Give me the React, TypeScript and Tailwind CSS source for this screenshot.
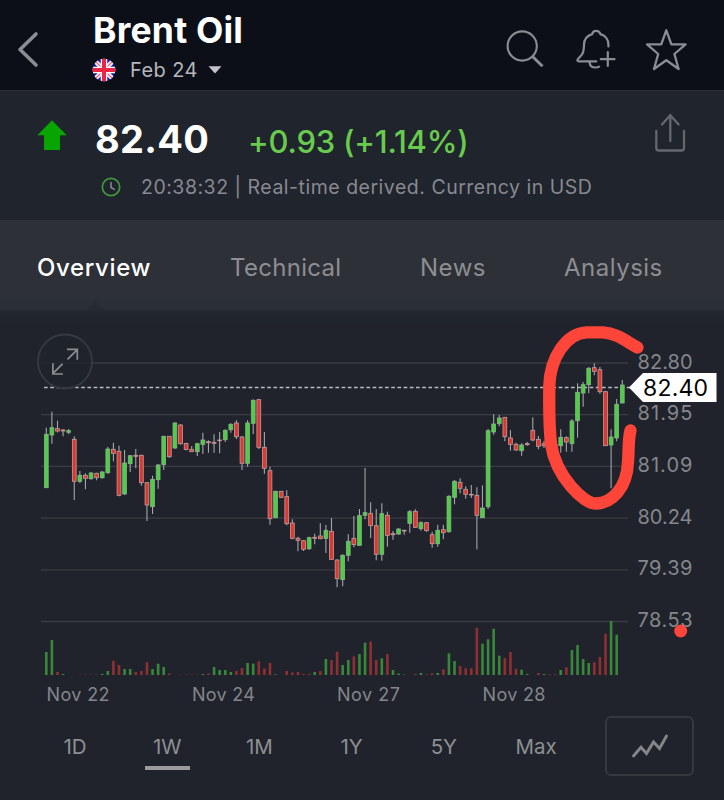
import type { ReactNode } from "react";

type Candle = [number, number, number, number, 0 | 1];

const X0 = 46.3;
const STEP = 5.592;
const BASE = 675;

// high, body top, body bottom, low, up?
const CANDLES: Candle[] = [
  [427.7, 434.3, 487.7, 487.7, 1], [411.7, 427.7, 435, 443.7, 1], [420.7, 428.7, 431, 432.5, 0], [429.3, 430, 431, 436.3, 0],
  [429, 430.7, 432.3, 434.3, 1], [436.3, 439.3, 481.3, 500, 0], [471, 475.3, 481.3, 483, 1], [473.3, 475.3, 478.3, 489.3, 0],
  [472, 473, 478.7, 479.7, 1], [472.7, 473.3, 477.7, 480.3, 0], [471, 472, 477.7, 478.7, 1], [447, 449, 472.7, 473.7, 1],
  [442.7, 449.3, 453.3, 461.3, 0], [445.7, 451.3, 495.3, 496.3, 0], [450, 463, 494, 495, 1], [455, 455.7, 463.7, 472, 1],
  [449, 455.3, 456.3, 468.3, 0], [454.7, 455.3, 482.7, 485.7, 0], [482, 482.7, 505, 521, 0], [475.7, 479.3, 506.7, 514, 1],
  [464, 465, 479.7, 488.7, 1], [435.7, 436.3, 464.7, 470, 1], [436, 436.3, 456.7, 458, 0], [422.3, 423, 448, 449, 1],
  [424, 425, 443.7, 444.7, 0], [442.7, 443.5, 449.5, 450.3, 0], [446, 449.3, 451.7, 452, 0], [442.7, 443.7, 451.7, 456, 1],
  [432.7, 440, 444.3, 454, 1], [440.3, 441.7, 442.7, 452.7, 0], [434.3, 442.3, 443.3, 452.7, 0], [432, 440, 440.7, 453.3, 0],
  [429.3, 430.3, 439.7, 442, 1], [423.3, 424.3, 429.7, 432.7, 1], [420.3, 423, 436.7, 439, 0], [436, 437, 463.3, 470, 0],
  [420.3, 423, 463.3, 466.7, 1], [399.3, 400.3, 423.3, 434, 1], [399, 399.7, 447.3, 449, 0], [432, 447.3, 468.3, 473.7, 0],
  [466.7, 470.7, 518.7, 524.7, 0], [490.7, 491.3, 517.7, 518.3, 1], [491, 491.3, 497.3, 498, 0], [490.3, 496.7, 523.7, 525.3, 0],
  [519.3, 523, 538.3, 539.3, 0], [536.7, 538.3, 540.3, 551.3, 0], [540, 540.7, 549.3, 551, 0], [536.7, 537.7, 548.7, 550, 1],
  [533.7, 537.3, 538.3, 544.3, 0], [523.3, 536, 538.7, 539.3, 0], [525, 530.3, 538.3, 553, 1], [518, 531.3, 559.3, 560, 0],
  [559.3, 560, 578.7, 587.3, 0], [554.3, 555.3, 579.7, 586.3, 1], [534.3, 541.3, 555.3, 561.3, 1], [516, 538.3, 544.7, 547.3, 0],
  [509, 515.7, 545.3, 546, 1], [468, 512.7, 515.3, 519.3, 1], [502.3, 513.3, 525.7, 538, 0], [509, 525.7, 554.3, 560.3, 0],
  [503.3, 513.7, 554.3, 560.7, 1], [511.7, 515.3, 535.3, 546.7, 0], [531, 533.7, 534.7, 539.7, 0], [528.3, 529, 534, 535, 1],
  [529.7, 530.3, 531, 534.7, 0], [510, 511.7, 523.3, 532.7, 1], [509.3, 511.3, 527.3, 528, 0], [521.3, 522.7, 528.7, 530.7, 1],
  [522, 522.7, 530.7, 531.7, 0], [531.7, 534.7, 543.7, 547.7, 0], [524.7, 530.3, 543.7, 546.7, 1], [524.7, 529.7, 532.7, 539.3, 0],
  [495.3, 496.3, 531.7, 532.7, 1], [480, 481.3, 497.3, 504.3, 1], [478.3, 482.3, 488.3, 493.3, 0], [486.3, 489.3, 494.3, 498.7, 0],
  [485, 494.3, 495, 498, 0], [487.3, 495.3, 515.3, 549.3, 0], [485.3, 508, 517.7, 518, 1], [429, 430.7, 506.7, 509, 1],
  [414.3, 424, 432, 434.7, 1], [415, 418, 423.7, 426.3, 1], [417, 417.3, 436.7, 441.3, 0], [430.3, 438, 444.3, 450.7, 0],
  [442.7, 444.3, 450, 450.7, 0], [443.3, 445, 450.7, 455.7, 1], [442, 443.7, 444.7, 445.7, 0], [417.3, 430.3, 440, 441.3, 0],
  [436, 439.3, 446.3, 449.3, 0], [441, 443.7, 445.7, 448, 0], [442, 444, 445, 448, 0], [443, 444.3, 445.3, 446, 0],
  [429.3, 437.3, 445.7, 452.7, 1], [436.3, 437.7, 442, 451.7, 0], [419.3, 421, 443.7, 451.7, 1], [383.3, 392.3, 420.7, 437.7, 1],
  [382, 384.7, 393, 406.7, 1], [367, 368.3, 384.7, 393.3, 1], [363.3, 367.7, 371.3, 375.3, 0], [367, 369.7, 391.7, 393.7, 0],
  [391, 391.7, 445.7, 446, 0], [429.3, 437, 445, 488.3, 1], [399, 404.3, 438, 441.3, 1], [380, 385, 403, 403.3, 1],
];

// bar heights, negative = down bar
const VOLUME = [
  23, 35, -3, 1, 0, 0, -0.4, -0.4, -0.4, -0.4, 1, 4, -14.3, -10, 6, 6, -3, -4, -12.7, 6, 11.3, 8, -1.5, 0, -0.4, -0.4,
  -0.4, -0.4, 1, -1.5, 8, 5, 5, 3, -4, -7, 12, 11.3, -13.7, -6.5, -12, 0.7, 0, -4, -2.5, -3, -1, -1, 3, -4, 16, -15,
  -23.3, 10, 15, -18.5, 21, 32.3, -33.3, -15, 16.7, -21, 5, 1.5, 0.4, 0, -1, 2, -0.5, -1.7, 2, -5.7, 21.7, 14, -9, -6.7,
  -6.7, -47.3, 31.3, 35.7, 46.3, 19.3, -17, -23, -6.3, 5.3, 1, 0, -2, 1, -0.7, -0.7, 5, -7.7, 25, 30, 16, 12, -12.7,
  -18, -41.3, 54, 40.3,
];

const PRICES = [
  { label: "82.80", y: 363 },
  { label: "81.95", y: 414.7 },
  { label: "81.09", y: 466.3 },
  { label: "80.24", y: 518.2 },
  { label: "79.39", y: 569.8 },
  { label: "78.53", y: 621.5 },
];

const DATES = [
  { label: "Nov 22", x: 46.5 },
  { label: "Nov 24", x: 192 },
  { label: "Nov 27", x: 337 },
  { label: "Nov 28", x: 482.5 },
];

const RANGES = ["1D", "1W", "1M", "1Y", "5Y", "Max"];

function Icon({ box, className, children }: { box: string; className: string; children: ReactNode }) {
  return (
    <svg viewBox={box} className={className} fill="none" stroke="currentColor" strokeLinecap="round" strokeLinejoin="round">
      {children}
    </svg>
  );
}

function Flag() {
  return (
    <svg viewBox="0 0 24 24" className="w-6 h-6 shrink-0">
      <defs>
        <clipPath id="flag">
          <circle cx="12" cy="12" r="11.3" />
        </clipPath>
      </defs>
      <g clipPath="url(#flag)">
        <path d="M0 0h24v24H0z" fill="#1d1f9c" />
        <path d="M0 0 24 24M24 0 0 24" stroke="#f4eef6" strokeWidth="4.5" />
        <path d="M0 0 24 24M24 0 0 24" stroke="#e8607f" strokeWidth="1.2" />
        <path d="M12 0v24M0 12h24" stroke="#fff" strokeWidth="6.6" />
        <path d="M12 0v24M0 12h24" stroke="#ee2447" strokeWidth="4" />
      </g>
    </svg>
  );
}

function Header() {
  return (
    <header className="flex h-[91px] bg-[#0c0f17] border-b border-[#2d3039] text-[#8b8d94]">
      <Icon box="15 28 26 44" className="w-[26px] h-11 ml-[15px] mt-7">
        <path d="M36 34 20 49.5 36 65" strokeWidth="3.6" />
      </Icon>
      <div className="ml-[51px] w-[410px]">
        <h1 className="mt-[11px] h-10 leading-10 pl-px text-[35.5px] font-bold tracking-[0.2px] text-white whitespace-nowrap">
          Brent Oil
        </h1>
        <div className="flex items-center h-[37px] text-[#b5b7be]">
          <Flag />
          <span className="ml-3.5 text-[20px] tracking-[0.4px]">Feb 24</span>
          <svg viewBox="0 0 14 8" className="w-3.5 h-2 ml-[10px]">
            <path d="M.5 .3h13L7 7.5z" fill="#c3c4ca" />
          </svg>
        </div>
      </div>
      <Icon box="504 28 42 42" className="w-[42px] h-[42px] mt-7 ml-0.5">
        <circle cx="522.2" cy="46" r="14.6" strokeWidth="2.1" />
        <path d="m532.5 56.5 10 9.8" strokeWidth="3" strokeLinecap="butt" />
      </Icon>
      <Icon box="574 28 42 42" className="w-[42px] h-[42px] mt-7 ml-7">
        <path
          d="M608.4 46.5v-2c0-5-3.2-9.1-8-10.4-.8-2.3-2.4-3.2-4.300-3.200-2 0-3.400 .9-4 3.200-5 1.500-8 5.500-8.100 10.600-.2 6.300-.7 9.300-4.200 12.300l-1.800 2c-1.200 1.200-.6 2.300 .8 2.300h17.500M589.500 62c.2 3.600 1.900 5.300 5 5.500 2 .1 3.600-.2 4.600-.9M607.800 52v14M600.800 59.200h13.700"
          strokeWidth="2.2"
        />
      </Icon>
      <Icon box="644 27 44 44" className="w-11 h-11 mt-[27px] ml-7">
        <path
          d="M666.3 30.300 671.400 44.400H685.600L674.400 54 678.600 69 666.300 60.200 654 69 658.200 54 647 44.400H661.200z"
          strokeWidth="2.3"
        />
      </Icon>
    </header>
  );
}

function Quote() {
  return (
    <section className="flex h-[129px] bg-[#20242c]">
      <svg viewBox="0 0 30 31" className="w-[30px] h-[31px] ml-[37px] mt-[29px] shrink-0">
        <path d="M15 .3 29.7 15.2H23V30H7V15.2H.3z" fill="#08a400" />
      </svg>
      <div className="ml-7 w-[560px] whitespace-nowrap">
        <div className="flex items-baseline h-[72px] leading-[96px]">
          <span className="text-[38px] font-bold text-white w-[153px] tracking-[0.3px]">82.40</span>
          <span className="text-[31px] font-medium text-[#69cb4e] tracking-[-0.2px]">+0.93 (+1.14%)</span>
        </div>
        <div className="flex items-center h-[49px] text-[#888a91]">
          <Icon box="0 0 20 20" className="w-5 h-5 ml-1.5 -mt-0.5">
            <circle cx="10" cy="10" r="8.7" stroke="#43983a" strokeWidth="1.7" />
            <path d="M10 5.5v5l3.3 1.9" strokeWidth="1.5" />
          </Icon>
          <span className="ml-5 text-[19.5px] tracking-[0.51px]">
            20:38:32 | Real-time derived. Currency in USD
          </span>
        </div>
      </div>
      <Icon box="652 110 36 46" className="w-9 h-[46px] mt-[19px] -ml-[3px] text-[#65676d]">
        <path
          d="M670.3 141v-26M662 124.5l8.3-9.3 8.3 9.3M656.3 131v17q0 2.5 2.500 2.500h22.700q2.500 0 2.500-2.500V131"
          strokeWidth="2.3"
        />
      </Icon>
    </section>
  );
}

function Tabs() {
  return (
    <nav className="relative flex h-[90px] pl-[37px] leading-[95px] text-[24px] text-[#8d8e92] whitespace-nowrap bg-linear-to-b from-[#2e3038] from-70% to-[#2a3038]">
      <span className="w-[193px] font-medium text-white tracking-[0.65px]">Overview</span>
      <span className="w-[190px] tracking-[0.3px]">Technical</span>
      <span className="w-[144px] tracking-[0.5px]">News</span>
      <span className="tracking-[0.5px]">Analysis</span>
      <svg viewBox="0 0 18 9" className="absolute left-[86px] bottom-0 w-[18px] h-[9px]">
        <path d="M0 9 9 0l9 9z" fill="#262a32" />
      </svg>
    </nav>
  );
}

function Chart() {
  return (
    <svg viewBox="0 310 724 400" className="block w-full h-[400px]">
      <defs>
        <linearGradient id="shade" x1="0" y1="0" x2="0" y2="1">
          <stop offset="0" stopColor="#22292f" />
          <stop offset="1" stopColor="#20232b" />
        </linearGradient>
      </defs>
      <rect x="0" y="310" width="724" height="14" fill="url(#shade)" />

      {PRICES.map((p) => (
        <g key={p.label}>
          <path d={`M41 ${p.y}H628`} stroke="#3a3d44" strokeWidth="1.3" />
          <text x="637.5" y={p.y + 5.5} fontSize="20" fill="#85878c" textLength="55">
            {p.label}
          </text>
        </g>
      ))}
      <path d="M44 387.5H632" stroke="#b9bbc1" strokeWidth="1.7" strokeDasharray="3.7 2.5" />

      <circle cx="65" cy="361.5" r="27" fill="#20242c" fillOpacity="0.85" stroke="#373a43" strokeWidth="1.8" />
      <path
        d="M67.500 359.300 77 349.800M67 349.300h10.300v10.500M62.500 363.800 53 373.300M52.900 363.300v10.700h10"
        fill="none"
        stroke="#8b8d90"
        strokeWidth="1.7"
      />

      {VOLUME.map((v, i) => (
        <rect
          key={i}
          x={X0 + i * STEP - 1.3}
          y={BASE - Math.abs(v)}
          width="2.6"
          height={Math.abs(v)}
          fill={v > 0 ? "#38873a" : "#8e3033"}
        />
      ))}

      {CANDLES.map(([hi, top, bottom, lo, up], i) => {
        const x = X0 + i * STEP;
        return (
          <g key={i}>
            <path d={`M${x} ${hi}V${lo}`} stroke="#a3a6aa" strokeWidth="1.1" />
            <rect
              x={x - 1.9}
              y={top}
              width="3.8"
              height={bottom - top}
              fill={up ? "#4fce45" : "#dc382f"}
              stroke={up ? "#86b487" : "#c59c9e"}
              strokeWidth="0.8"
            />
          </g>
        );
      })}

      {DATES.map((d) => (
        <text key={d.label} x={d.x} y="700.5" fontSize="18" fill="#84868c" textLength="63">
          {d.label}
        </text>
      ))}

      <path d="M629 387.500 643 373h73.500v29H643z" fill="#fff" />
      <text x="643" y="395.5" fontSize="23" fill="#050505" textLength="65">
        82.40
      </text>

      {/* hand-drawn marker */}
      <path
        d="M637.5 347.5C627 342 617 333 603 332.300H587C566 333 550 358 549.300 386C549 410 549 425 551 444C556 477 584 504 596 503.500C612 503 627 488 628 462C629 450 628 440 630.500 430.500"
        fill="none"
        stroke="#fe4539"
        strokeWidth="12.3"
        strokeLinecap="round"
      />
      <circle cx="680.7" cy="631" r="6.5" fill="#fe4539" />
    </svg>
  );
}

function RangePicker() {
  return (
    <div className="flex h-[90px] pt-1.5 pl-[29px] text-[20.5px] text-[#8d8f93]">
      {RANGES.map((r) => (
        <div key={r} className="relative w-[92.2px] h-[60px] leading-[61px] text-center">
          {r}
          {r === "1W" && <span className="absolute left-6 bottom-0 mb-1.5 w-[45px] h-1 bg-[#9a9b9e]" />}
        </div>
      ))}
      <div className="ml-[23px] w-[89px] h-[60px] border-2 border-[#35383f] rounded-md flex items-center justify-center">
        <Icon box="630 732 38 28" className="w-[38px] h-7 text-[#858689]">
          <path d="m632.5 756 7.500-8.700 5.500 6.200 7-11.500 6 6.500 7-12.500" strokeWidth="2.9" strokeLinejoin="miter" />
        </Icon>
      </div>
    </div>
  );
}

export default function App() {
  return (
    <main className="w-[724px] h-[800px] overflow-hidden bg-[#20232b] font-['Inter',sans-serif]">
      <Header />
      <Quote />
      <Tabs />
      <Chart />
      <RangePicker />
    </main>
  );
}
